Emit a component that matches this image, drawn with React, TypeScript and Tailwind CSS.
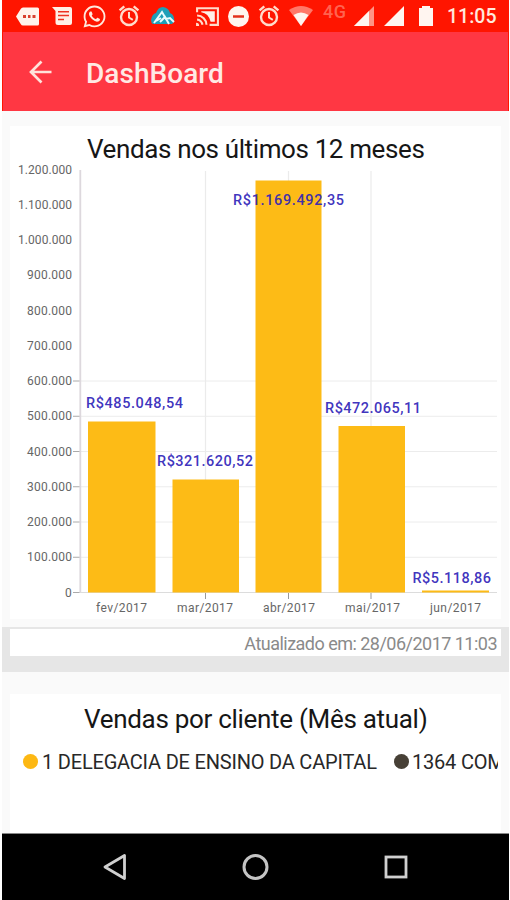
import React from "react";
import { MdCast } from "react-icons/md";
import { FaWhatsapp } from "react-icons/fa";

const ticks = [
  "0", "100.000", "200.000", "300.000", "400.000", "500.000", "600.000",
  "700.000", "800.000", "900.000", "1.000.000", "1.100.000", "1.200.000",
];

const bars = [
  { month: "fev/2017", mx: 96, mw: 51, x: 88, w: 67.5, top: 421.5, label: "R$485.048,54", lx: 86, lw: 97, ly: 407.5 },
  { month: "mar/2017", mx: 177, mw: 56, x: 172.5, w: 66.5, top: 479.5, label: "R$321.620,52", lx: 157, lw: 96, ly: 465.5 },
  { month: "abr/2017", mx: 263, mw: 52, x: 255.5, w: 66, top: 180.5, label: "R$1.169.492,35", lx: 233, lw: 111, ly: 204.5 },
  { month: "mai/2017", mx: 345, mw: 55, x: 338.5, w: 66.5, top: 426, label: "R$472.065,11", lx: 325, lw: 96, ly: 412.5 },
  { month: "jun/2017", mx: 430, mw: 51, x: 422, w: 67, top: 590.5, label: "R$5.118,86", lx: 412.5, lw: 78.5, ly: 583 },
];

const BASE = 592.5;
const STEP = 35.25;

function SalesChart() {
  return (
    <svg className="block h-[451px] w-[491px] overflow-visible" viewBox="10 168 491 451" fontFamily="Roboto, sans-serif">
      {ticks.map((t, i) => {
        const y = BASE - i * STEP;
        const w = t.length === 1 ? 7 : t.length === 7 ? 45 : 54;
        return (
          <g key={t}>
            {i <= 6 && <path d={`M80 ${y}H497`} stroke="#ececec" strokeWidth="1" />}
            {i <= 6 && <path d={`M73 ${y}H80`} stroke="#aaa" strokeWidth="1" />}
            <text x={72 - w} y={y + 4.2} fontSize="12" textLength={w} lengthAdjust="spacing" fill="#666">{t}</text>
          </g>
        );
      })}
      <path d="M205.500 171V592M288.500 171V592M371 171V592" stroke="#ebebeb" strokeWidth="1.2" />
      <path d="M80.300 170V593" stroke="#ddd8dd" strokeWidth="1.8" />
      <path d="M80 592.500H497" stroke="#dcdcdc" />
      <path d="M205.500 593V599M288.500 593V599M371 593V599" stroke="#999" />
      {bars.map((b) => (
        <rect key={b.month} x={b.x} y={b.top} width={b.w} height={592.5 - b.top} fill="#fdbb16" />
      ))}
      {bars.map((b) => (
        <g key={b.month}>
          <text x={b.lx} y={b.ly} fontSize="14.5" fontWeight="500" textLength={b.lw} fill="#2e22b8" fillOpacity="0.92">{b.label}</text>
          <text x={b.mx} y="612" fontSize="12" textLength={b.mw} fill="#666">{b.month}</text>
        </g>
      ))}
    </svg>
  );
}

function AlarmIcon({ className }: { className: string }) {
  return (
    <svg className={className} viewBox="0 0 24 24" fill="none" stroke="#ffdccb" strokeWidth="2.4">
      <circle cx="12" cy="13" r="8" />
      <path d="M12 8V13.500L15.800 15.800" strokeWidth="2" />
      <path d="M2.600 6.300 7.300 2.400M21.400 6.300 16.700 2.400" />
    </svg>
  );
}

function StatusBar() {
  return (
    <div className="flex h-8 items-center bg-[#ff1500] pl-[14px] text-[#ffe9dc]">
      <svg className="h-[19px] w-[23px]" viewBox="0 0 23 19">
        <path d="M7 0.5H21.5Q23 .5 23 2V17Q23 18.5 21.5 18.5H7Q5.5 18.5 4.7 17L0 9.5 4.7 2Q5.5 .5 7 .5Z" fill="#fff3ec" />
        <path d="M7 8h3v3H7zM12 8h2.5v3H12zM16.500 8h3v3h-3z" fill="#d8402e" />
      </svg>
      <svg className="ml-[13px] h-[19px] w-[20px]" viewBox="0 0 20 19">
        <path d="M0 0H18Q20 0 20 2V16Q20 18 18 18H6Q3.500 18 3.500 15.500V4Z" fill="#fff0e6" />
        <path d="M6 4.800H17M6 8.500H17M6 12.500H12" stroke="#ee3420" strokeWidth="1.6" />
      </svg>
      <FaWhatsapp className="ml-[10px] h-[25px] w-[25px]" />
      <AlarmIcon className="ml-[10px] h-[24px] w-[24px]" />
      <svg className="ml-[10px] h-[18px] w-[24px]" viewBox="0 0 24 18">
        <path d="M0 13Q1 7 5 6 7 0 12 0 18 1 19 6 24 8 23 15L21 17H2Q0 16 0 13Z" fill="#1e9fb8" />
        <path d="M3 16 11 5 15 12 19 11 23 15M9 15 14 10 18 17M5 14 10 11" fill="none" stroke="#e8fbfd" strokeWidth="2" />
      </svg>
      <svg className="ml-[20px] h-[25px] w-[25px]" viewBox="0 0 24 24" fill="none" stroke="#ffdccb" strokeWidth="2">
        <path d="M2 8V4H22V20H14" />
        <path d="M6 7H19V17H15Q13 9 6 8Z" fill="#fff0e8" stroke="none" />
        <path d="M2 11A9 9 0 0 1 11 20M2 15A5 5 0 0 1 7 20" />
        <path d="M1 18A3 3 0 0 1 4 21H1Z" fill="#ffdccb" stroke="none" />
      </svg>
      <svg className="ml-[8px] h-[21px] w-[21px]" viewBox="0 0 21 21">
        <circle cx="10.500" cy="10.500" r="10.500" fill="#fff5ef" />
        <path d="M5 10.500H16" stroke="#e3301c" strokeWidth="2.500" />
      </svg>
      <AlarmIcon className="ml-[8px] h-[24px] w-[24px]" />
      <svg className="ml-[8px] h-[20px] w-[24px]" viewBox="0 0 24 20">
        <path d="M0 4Q12-4 24 4L12 20Z" fill="#ff7869" />
        <path d="M4.500 9Q12 4 19.500 9L12 20Z" fill="#fff5f0" />
      </svg>
      <span className="-mt-[9px] ml-[10px] w-[25px] font-[Roboto,sans-serif] text-[18px] font-medium leading-5 tracking-[0.5px] text-[#ff6350]">4G</span>
      <svg className="ml-[6px] h-[20px] w-[20px]" viewBox="0 0 20 20">
        <path d="M0 20 20 0V20Z" fill="#ff9485" />
        <path d="M0 20 15 5V20Z" fill="#fff5f0" />
      </svg>
      <svg className="ml-[10px] h-[20px] w-[20px]" viewBox="0 0 20 20">
        <path d="M0 20 20 0V20Z" fill="#fff5f0" />
      </svg>
      <svg className="ml-[15px] h-[20px] w-[14px]" viewBox="0 0 14 20">
        <path d="M0 2H3V0H11V2H14V20H0Z" fill="#fff5f0" />
      </svg>
      <span className="ml-[14px] whitespace-nowrap pt-px font-[Roboto,sans-serif] text-[19.500px] font-medium leading-8 tracking-[0px]">11:05</span>
    </div>
  );
}

export default function App() {
  return (
    <div className="flex h-[900px] w-[510px] flex-col overflow-hidden bg-white pl-[2px] pr-[1.5px] font-[Roboto,sans-serif]">
      <StatusBar />
      <header className="flex h-[78.500px] shrink-0 items-center border-x border-[#ff1500] bg-[#ff3743] pl-[21px] pt-[2px] text-[#ffe9e4]">
        <svg className="h-[32px] w-[32px]" viewBox="0 0 32 32" fill="none" stroke="#ffe2da" strokeWidth="2.700">
          <path d="M27.500 16H7.500M17.500 5.500 7 16 17.500 26.500" />
        </svg>
        <h1 className="ml-[30px] pt-[3px] text-[28px] font-medium leading-8 tracking-[0.05px]">DashBoard</h1>
      </header>
      <main className="flex h-[722.500px] shrink-0 flex-col overflow-hidden bg-[#fafafa] pt-[15px]">
        <section className="ml-2 h-[493px] w-[491px] shrink-0 bg-white">
          <h2 className="h-[42px] pl-[77px] pt-[7px] text-[26px] leading-8 tracking-[-0.38px] text-[#161616] whitespace-nowrap">Vendas nos últimos 12 meses</h2>
          <SalesChart />
        </section>
        <div className="mt-2 h-[45px] shrink-0 bg-[#e6e6e6] pl-2 pt-[2px]">
          <div className="h-[27px] w-[491px] whitespace-nowrap bg-white pr-1 text-right text-[18px] leading-[30px] tracking-[-0.52px] text-[#8a8a8a]">Atualizado em: 28/06/2017 11:03</div>
        </div>
        <section className="ml-2 mt-[22px] h-[140px] w-[491px] shrink-0 bg-white">
          <h2 className="h-[52px] pl-[74px] pt-[9px] text-[26px] leading-8 tracking-[-0.3px] text-[#161616] whitespace-nowrap">Vendas por cliente (Mês atual)</h2>
          <div className="flex h-8 w-[488px] items-center overflow-hidden whitespace-nowrap pl-[13px] text-[20px] tracking-[-0.2px] text-[#282828]">
            <i className="size-[15px] shrink-0 rounded-full bg-[#fdb813]" />
            <span className="ml-[4px] w-[335px] shrink-0">1 DELEGACIA DE ENSINO DA CAPITAL</span>
            <i className="ml-[17px] size-[15px] shrink-0 rounded-full bg-[#474036]" />
            <span className="ml-[3px]">1364 COM</span>
          </div>
        </section>
      </main>
      <nav className="flex h-[68px] shrink-0 items-center border-t border-[#888] bg-black pl-[100px]">
        <svg className="h-[28px] w-[26px]" viewBox="0 0 26 28">
          <path d="M3 13 22.500 1.500V24.500Z" fill="none" stroke="#d0d0d0" strokeWidth="2.800" strokeLinejoin="round" />
        </svg>
        <svg className="ml-[113px] h-[28px] w-[28px]" viewBox="0 0 28 28">
          <circle cx="14.500" cy="13" r="11.500" fill="none" stroke="#c4c4c4" strokeWidth="3" />
        </svg>
        <svg className="ml-[113px] h-[28px] w-[28px]" viewBox="0 0 28 28">
          <rect x="4" y="3" width="20" height="20" fill="none" stroke="#d0d0d0" strokeWidth="2.800" />
        </svg>
      </nav>
    </div>
  );
}
